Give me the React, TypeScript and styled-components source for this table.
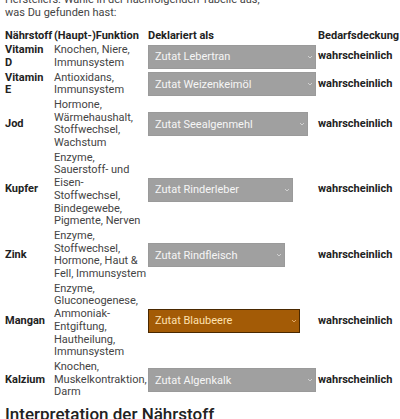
import React from "react";
import styled, { createGlobalStyle } from "styled-components";

const GlobalStyle = createGlobalStyle`
  html, body { margin: 0; padding: 0; background: #ffffff; }
  body { font-family: Roboto, "Noto Sans", Arial, sans-serif; overflow: hidden; }
`;

const Page = styled.div`
  margin-top: -6px;
  padding: 0 2px 0 4px;
`;

const Intro = styled.p`
  margin: 0 0 9px 1px;
  font-size: 11px;
  line-height: 12.7px;
  color: #444;
`;

const Table = styled.table`
  width: 394px;
  border-collapse: collapse;
  table-layout: fixed;
  font-size: 11px;
  line-height: 12.7px;
`;

const HeadCell = styled.th<{ $w?: number }>`
  ${(p) => (p.$w ? `width: ${p.$w}px;` : "")}
  padding: 2px 1px 0;
  text-align: left;
  font-weight: 700;
  color: #222;
  white-space: nowrap;
`;

const Cell = styled.td<{ $bold?: boolean }>`
  padding: 1px;
  vertical-align: middle;
  color: ${(p) => (p.$bold ? "#222" : "#444")};
  font-weight: ${(p) => (p.$bold ? 700 : 400)};
  white-space: nowrap;
`;

const Line = styled.span`
  display: block;
`;

const SelectWrap = styled.div<{ $w: number }>`
  position: relative;
  width: ${(p) => p.$w}px;
  height: 24px;
`;

const Select = styled.select<{ $active?: boolean }>`
  appearance: none;
  -webkit-appearance: none;
  width: 100%;
  height: 100%;
  margin: 0;
  padding: 0 12px 0 6px;
  font-family: Roboto, "Noto Sans", Arial, sans-serif;
  font-size: 11px;
  border-radius: 0;
  outline: none;
  background: ${(p) => (p.$active ? "#a35b06" : "#a0a0a0")};
  border: 1px solid ${(p) => (p.$active ? "#4a2800" : "#9a9a9a")};
  color: ${(p) => (p.$active ? "#ffe2b0" : "#f6f6f6")};
`;

const Chevron = styled.svg`
  position: absolute;
  right: 3px;
  top: 50%;
  margin-top: -2px;
  width: 6px;
  height: 4px;
  pointer-events: none;
`;

const Heading = styled.h2`
  margin: 4px 0 0 1px;
  font-size: 17px;
  line-height: 20px;
  font-weight: 500;
  color: #222;
  white-space: nowrap;
`;

type Row = {
  name: string[];
  fn: string[];
  ingredient: string;
  w: number;
  active?: boolean;
};

const rows: Row[] = [
  { name: ["Vitamin", "D"], fn: ["Knochen, Niere,", "Immunsystem"], ingredient: "Zutat Lebertran", w: 168 },
  { name: ["Vitamin", "E"], fn: ["Antioxidans,", "Immunsystem"], ingredient: "Zutat Weizenkeimöl", w: 168 },
  { name: ["Jod"], fn: ["Hormone,", "Wärmehaushalt,", "Stoffwechsel,", "Wachstum"], ingredient: "Zutat Seealgenmehl", w: 160 },
  {
    name: ["Kupfer"],
    fn: ["Enzyme,", "Sauerstoff- und", "Eisen-", "Stoffwechsel,", "Bindegewebe,", "Pigmente, Nerven"],
    ingredient: "Zutat Rinderleber",
    w: 145,
  },
  { name: ["Zink"], fn: ["Enzyme,", "Stoffwechsel,", "Hormone, Haut &", "Fell, Immunsystem"], ingredient: "Zutat Rindfleisch", w: 137 },
  {
    name: ["Mangan"],
    fn: ["Enzyme,", "Gluconeogenese,", "Ammoniak-", "Entgiftung,", "Hautheilung,", "Immunsystem"],
    ingredient: "Zutat Blaubeere",
    w: 152,
    active: true,
  },
  { name: ["Kalzium"], fn: ["Knochen,", "Muskelkontraktion,", "Darm"], ingredient: "Zutat Algenkalk", w: 168 },
];

export default function App() {
  return (
    <>
      <GlobalStyle />
      <Page>
        <Intro>
          Herstellers. Wähle in der nachfolgenden Tabelle aus,
          <br />
          was Du gefunden hast:
        </Intro>
        <Table>
          <thead>
            <tr>
              <HeadCell $w={47}>Nährstoff</HeadCell>
              <HeadCell $w={92}>(Haupt-)Funktion</HeadCell>
              <HeadCell $w={168}>Deklariert als</HeadCell>
              <HeadCell>Bedarfsdeckung</HeadCell>
            </tr>
          </thead>
          <tbody>
            {rows.map((r) => (
              <tr key={r.ingredient}>
                <Cell $bold>
                  {r.name.map((l) => (
                    <Line key={l}>{l}</Line>
                  ))}
                </Cell>
                <Cell>
                  {r.fn.map((l, i) => (
                    <Line key={i}>{l}</Line>
                  ))}
                </Cell>
                <Cell>
                  <SelectWrap $w={r.w}>
                    <Select $active={r.active} defaultValue={r.ingredient}>
                      <option>{r.ingredient}</option>
                    </Select>
                    <Chevron viewBox="0 0 6 4">
                      <polyline
                        points="1,1 3,3 5,1"
                        fill="none"
                        stroke={r.active ? "#e6b070" : "#d6d6d6"}
                        strokeWidth="0.9"
                      />
                    </Chevron>
                  </SelectWrap>
                </Cell>
                <Cell $bold>wahrscheinlich</Cell>
              </tr>
            ))}
          </tbody>
        </Table>
        <Heading>Interpretation der Nährstoff</Heading>
      </Page>
    </>
  );
}
